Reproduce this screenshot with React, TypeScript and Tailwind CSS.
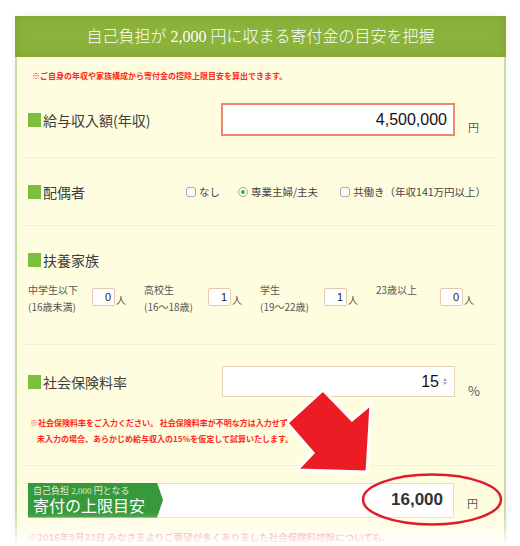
import React from "react";

const numFont = "font-['Liberation_Sans','DejaVu_Sans',sans-serif]";
const serifFont = "font-['Liberation_Serif','Noto_Sans_CJK_JP',serif]";

const Label: React.FC<{ children: React.ReactNode }> = ({ children }) => (
  <div className="flex items-center gap-[2px] text-[14px] leading-[20px] text-[#3d3d3d]">
    <span className="w-[13px] h-[14px] bg-[#7cbf3f]" />
    {children}
  </div>
);

const Separator = () => (
  <div className="mx-[7px] border-t border-dotted border-[#dfe7c4]" />
);

const Radio: React.FC<{ checked?: boolean; label: string; className?: string }> = ({
  checked,
  label,
  className = "",
}) => (
  <div className={`flex items-center gap-[3px] ${className}`}>
    {checked ? (
      <span className="w-[10px] h-[10px] rounded-full border border-[#a0a0a0] bg-white flex items-center justify-center">
        <span className="w-[4px] h-[4px] rounded-full bg-[#33bb11]" />
      </span>
    ) : (
      <span className="w-[10px] h-[10px] rounded-[3px] border border-[#a8a8a8] bg-white" />
    )}
    <span>{label}</span>
  </div>
);

const dependents = [
  { a: "中学生以下", b: "(16歳未満)", v: "0" },
  { a: "高校生", b: "(16〜18歳)", v: "1" },
  { a: "学生", b: "(19〜22歳)", v: "1" },
  { a: "23歳以上", b: "", v: "0" },
];

const App: React.FC = () => {
  return (
    <div className="relative w-[520px] h-[546px] overflow-hidden bg-white font-['Noto_Sans_CJK_JP',sans-serif]">
      <div className="ml-[15px] mt-[16px] w-[491px] shadow-[0_0_6px_rgba(0,0,0,0.08)]">
        {/* Header */}
        <div
          className={`h-[41px] flex items-center justify-center bg-[#8bb23b] shadow-[inset_0_0_10px_rgba(120,150,40,0.6)] text-white text-[16px] font-light ${serifFont}`}
        >
          自己負担が 2,000 円に収まる寄付金の目安を把握
        </div>

        {/* Body */}
        <div className="bg-[#fffde0] border-x-2 border-[#cadca6] pb-[40px]">
          <div className="px-[11px] pt-[13px] pl-[15px] text-[8px] leading-[12px] font-bold text-[#ff2a1a]">
            ※ご自身の年収や家族構成から寄付金の控除上限目安を算出できます。
          </div>

          {/* Income */}
          <div className="flex items-center px-[11px] mt-[21px] mb-[21px]">
            <div className="w-[193px]">
              <Label>給与収入額(年収)</Label>
            </div>
            <div
              className={`w-[234px] h-[33px] border-2 border-[#f1866f] bg-white flex items-center justify-end pr-[6px] text-[16px] text-[#111] ${numFont}`}
            >
              4,500,000
            </div>
            <span className="ml-[13px] mt-[16px] text-[11px] text-[#555]">円</span>
          </div>
          <Separator />

          {/* Spouse */}
          <div className="flex items-center px-[11px] h-[67px]">
            <div className="w-[158px]">
              <Label>配偶者</Label>
            </div>
            <div className="flex items-center text-[10.5px] text-[#444]">
              <Radio label="なし" />
              <Radio checked label="専業主婦/主夫" className="ml-[18px]" />
              <Radio label="共働き（年収141万円以上）" className="ml-[22px]" />
            </div>
          </div>
          <Separator />

          {/* Dependents */}
          <div className="px-[11px] pt-[24px] pb-[29px]">
            <Label>扶養家族</Label>
            <div className="flex mt-[11px] h-[34px]">
              {dependents.map((d) => (
                <div key={d.a} className="w-[116px] flex items-start">
                  <div className="w-[64px] text-[10px] leading-[17px] text-[#555]">
                    <div>{d.a}</div>
                    {d.b && <div>{d.b}</div>}
                  </div>
                  <div
                    className={`mt-[7px] w-[23px] h-[18px] rounded-[2px] border border-[#e2c9b0] bg-white flex items-center justify-end pr-[3px] text-[11px] text-[#222] ${numFont}`}
                  >
                    {d.v}
                  </div>
                  <span className="mt-[12px] ml-[1px] text-[10px] leading-[14px] text-[#555]">人</span>
                </div>
              ))}
            </div>
          </div>
          <Separator />

          {/* Social insurance */}
          <div className="px-[11px] pt-[18px] pb-[18px]">
            <div className="flex items-center">
              <div className="w-[194px]">
                <Label>社会保険料率</Label>
              </div>
              <div
                className={`w-[233px] h-[31px] border border-[#e4d3b6] bg-white flex items-center justify-end pr-[6px] gap-[3px] text-[16px] text-[#111] ${numFont}`}
              >
                15
                <span className="flex flex-col items-center gap-[1px] w-[6px]">
                  <span className="w-0 h-0 border-x-[2.5px] border-x-transparent border-b-[3px] border-b-[#aab]" />
                  <span className="w-0 h-0 border-x-[2.5px] border-x-transparent border-t-[3px] border-t-[#aab]" />
                </span>
              </div>
              <span className="ml-[13px] mt-[18px] text-[13px] text-[#555]">%</span>
            </div>
            <div className="mt-[14px] text-[8px] leading-[16px] font-bold text-[#ff2a1a]">
              <div className="pl-[2px]">
                ※社会保険料率をご入力ください。 社会保険料率が不明な方は入力せず、
              </div>
              <div className="pl-[9px]">
                未入力の場合、あらかじめ給与収入の15%を仮定して試算いたします。
              </div>
            </div>
          </div>
          <Separator />

          {/* Result */}
          <div className="px-[11px] pt-[17px]">
            <div className="flex items-center">
              <div className="flex w-[426px] h-[35px] bg-white border-y border-r border-[#eadbc3]">
                <div
                  className={`w-[135px] h-[35px] -my-px bg-[#37993c] [clip-path:polygon(0_0,129px_0,135px_50%,129px_100%,0_100%)] pl-[5px] pt-[3px] text-white ${serifFont}`}
                >
                  <div className="text-[9px] leading-[11px] text-[#dff0d2]">自己負担 2,000 円となる</div>
                  <div className="text-[16px] leading-[19px]">寄付の上限目安</div>
                </div>
                <div
                  className={`flex-1 flex items-center justify-end pr-[10px] text-[17px] font-bold text-[#333] ${numFont}`}
                >
                  16,000
                </div>
              </div>
              <span className="ml-[13px] mt-[6px] text-[11px] text-[#555]">円</span>
            </div>
            <div className="mt-[13px] text-[9.5px] leading-[12px] font-bold text-[#f07a7a]">
              ※2016年9月23日 みなさまよりご要望が多くありました社会保険料控除についても、
            </div>
          </div>
        </div>
      </div>

      {/* bottom fade */}
      <div className="absolute inset-x-0 bottom-0 h-[34px] bg-linear-to-b from-white/0 via-white/40 to-white" />

      {/* Arrow and circle drawn over the form */}
      <svg
        className="absolute left-0 top-0 pointer-events-none"
        width="520"
        height="546"
        viewBox="0 0 520 546"
      >
        <polygon
          points="323,390 352,420 371,404 367,472 297,470 313,453 287,423"
          fill="#ec1c24"
          stroke="#ffffff"
          strokeWidth="3"
          strokeLinejoin="miter"
        />
        <ellipse
          cx="432"
          cy="499.5"
          rx="69"
          ry="25"
          fill="none"
          stroke="#e01b2a"
          strokeWidth="2.5"
        />
      </svg>
    </div>
  );
};

export default App;
